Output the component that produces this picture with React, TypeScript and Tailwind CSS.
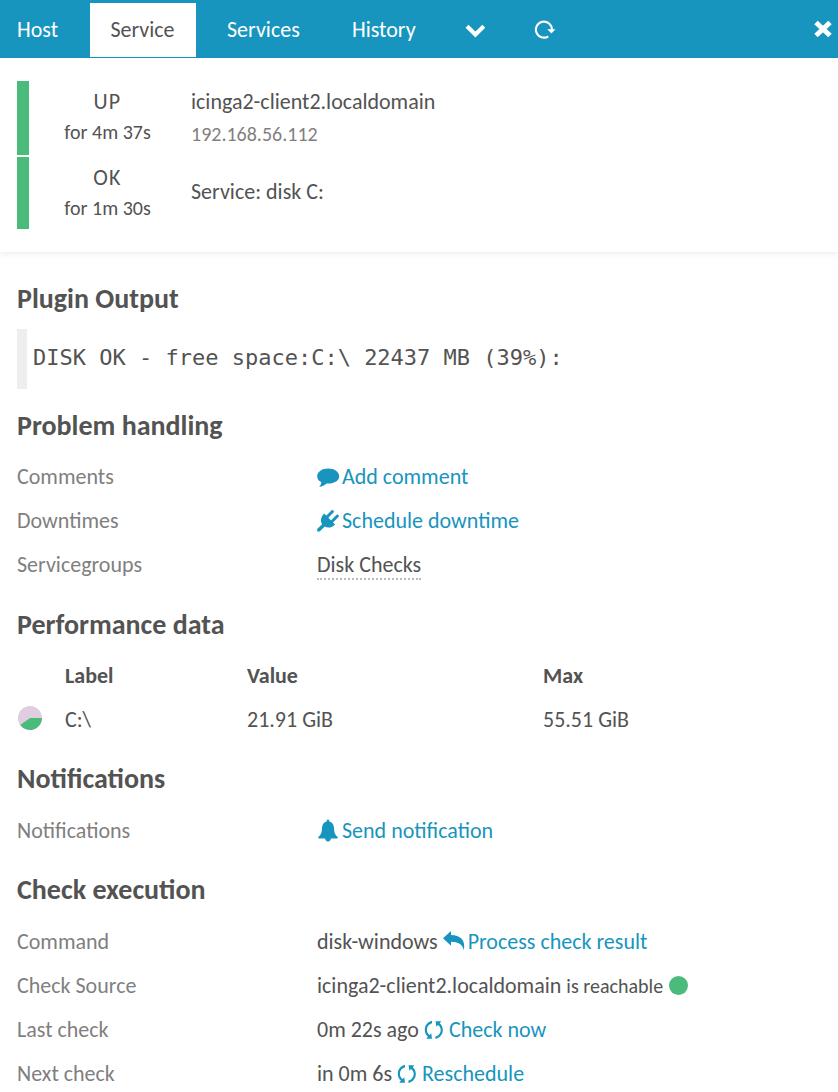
import { ReactNode } from 'react';

function Heading({ children }: { children: ReactNode }) {
  return <h2 className="h-[67px] pl-[17px] pt-[21px] text-[28px] font-bold leading-8">{children}</h2>;
}

function Row({ label, children }: { label: string; children: ReactNode }) {
  return (
    <div className="flex h-11 items-center pl-[17px]">
      <div className="w-[300px] shrink-0 text-[#7f7f7f]">{label}</div>
      <div className="flex items-center">{children}</div>
    </div>
  );
}

function Sync() {
  return (
    <svg className="mb-px mr-[5px] h-5 w-5 shrink-0" viewBox="0 0 20 20" fill="#1795be">
      <path d="M8 .8C3.8 1.8.8 5.3.8 9.8C.8 12.7 1.9 15 3.9 16.6L2.3 18.8H8L7.2 13.2L5.6 15C3.8 13.7 2.9 12 2.9 9.8C2.9 6.5 5 4 8 3.2Z" />
      <path d="M11.4 19C15.8 18 18.8 14.5 18.8 10C18.8 7.2 17.7 4.9 15.7 3.3L17.3 1.2H11.6L12.4 6.8L14 5C15.8 6.2 16.7 8 16.7 10C16.7 13.3 14.6 15.9 11.4 16.6Z" />
    </svg>
  );
}

export default function App() {
  return (
    <div className="h-[1092px] w-[838px] overflow-hidden bg-white font-['Carlito','Calibri','Lato',sans-serif] text-[22px] leading-7 text-[#535353]">
      <nav className="flex h-[58px] items-center bg-[#1795be] text-white">
        <div className="w-[90px] pl-[17px] pt-[2px]">Host</div>
        <div className="mt-[3px] flex h-[54px] w-[106px] items-center justify-center self-start bg-white pr-px text-[#535353]">Service</div>
        <div className="w-[156px] pl-[31px] pt-[2px]">Services</div>
        <div className="w-[113px] pt-[2px]">History</div>
        <svg className="mt-px h-5 w-5" viewBox="0 0 20 20" fill="none">
          <path d="M2 6.3L10.4 14.5L18.8 6.3" stroke="white" strokeWidth="4.2" />
        </svg>
        <svg className="ml-[49px] mt-px h-[22px] w-[22px]" viewBox="0 0 22 22" fill="none">
          <path d="M14.3 17.3A8 8 0 1 1 17.9 10.8" stroke="white" strokeWidth="2.1" />
          <path d="M13.3 10.2H21.5L17.4 14.6Z" fill="white" />
        </svg>
        <svg className="ml-auto mr-[6px] h-[18px] w-[18px]" viewBox="0 0 18 18">
          <path d="M2 2.5L16 15.5M16 2.5L2 15.5" stroke="white" strokeWidth="5" />
        </svg>
      </nav>
      <header className="h-[194px] pl-[17px] pt-[23px] shadow-[0_2px_6px_rgba(0,0,0,0.07)]">
        <div className="mb-[2px] flex h-[74px]">
          <div className="w-3 bg-[#4abb7b]" />
          <div className="w-[162px] pr-[5px] text-center">
            <div className="pt-[7px] tracking-[1.2px]">UP</div>
            <div className="pt-[2px] text-[20px]">for 4m 37s</div>
          </div>
          <div>
            <div className="pt-[7px]">icinga2-client2.localdomain</div>
            <div className="pt-1 text-[20px] text-[#7f7f7f]">192.168.56.112</div>
          </div>
        </div>
        <div className="flex h-[72px]">
          <div className="w-3 bg-[#4abb7b]" />
          <div className="w-[162px] pr-[5px] text-center">
            <div className="pt-[7px] tracking-[1.2px]">OK</div>
            <div className="pt-[2px] text-[20px]">for 1m 30s</div>
          </div>
          <div className="flex items-center pb-[2px]">Service: disk C:</div>
        </div>
      </header>
      <h2 className="h-[77px] pl-[17px] pt-[31px] text-[28px] font-bold leading-8">Plugin Output</h2>
      <pre className="ml-[17px] flex h-[60px] items-center border-l-[10px] border-[#eee] pb-[2px] pl-[6px] font-['DejaVu_Sans_Mono',monospace] text-[22px]">{'DISK OK - free space:C:\\ 22437 MB (39%):'}</pre>
      <div className="-mb-px"><Heading>Problem handling</Heading></div>
      <Row label="Comments">
        <svg className="mr-[2px] h-6 w-[23px]" viewBox="0 0 23 24" fill="#1795be">
          <path d="M11.2 3.5C17.5 3.5 22.2 7 22.2 11.2S17.5 18.5 11.3 18.5L9.7 18.4C7.5 20.4 5 21.5 2.3 21.8C3.7 20.3 4.2 19 4.2 17.1C1.5 15.8.2 13.7.2 11.2C.2 7 4.9 3.5 11.2 3.5Z" />
        </svg>
        <span className="text-[#1795be]">Add comment</span>
      </Row>
      <Row label="Downtimes">
        <svg className="mr-[2px] h-6 w-[23px]" viewBox="0 0 23 24" fill="#1795be">
          <path d="M7.2 4.6L18.1 15.5C15.2 18.5 11.3 19.6 7.7 17.6L2.7 22.5H.2V20L5.1 15.2C2.9 11.7 4.1 7.8 7.2 4.6Z" />
          <path d="M10 8L15.4 2.5M14.7 12.7L20.4 7" stroke="#1795be" strokeWidth="3" strokeLinecap="round" />
        </svg>
        <span className="text-[#1795be]">Schedule downtime</span>
      </Row>
      <Row label="Servicegroups"><span className="mt-[2px] border-b-2 border-dotted border-[#bbb] leading-[26px]">Disk Checks</span></Row>
      <div className="-mb-px pt-px"><Heading>Performance data</Heading></div>
      <div className="flex h-11 items-center pl-[65px] font-bold">
        <div className="w-[182px]">Label</div>
        <div className="w-[296px]">Value</div>
        <div>Max</div>
      </div>
      <div className="flex h-11 items-center pl-[17px]">
        <svg className="-mt-1 mr-[22px] h-[26px] w-[26px]" viewBox="0 0 26 26">
          <circle cx="13" cy="13" r="12" fill="#dfcde0" />
          <path d="M13 13H25A12 12 0 0 1 3.2 19.9Z" fill="#4abb7b" />
        </svg>
        <div className="w-[182px]">C:\</div>
        <div className="w-[296px]">21.91 GiB</div>
        <div>55.51 GiB</div>
      </div>
      <Heading>Notifications</Heading>
      <Row label="Notifications">
        <svg className="mr-[2px] h-6 w-[23px]" viewBox="0 0 23 24" fill="#1795be">
          <path d="M11 .4C12 .4 12.3 1.2 12.3 2.4C15.2 3 16.8 5.4 17 8.9C17.2 13.8 18.1 15.9 20.8 18C20.8 19 20.4 19.6 19.3 19.6H13.8A2.8 2.8 0 0 1 8.2 19.6H2.7C1.6 19.6 1.2 19 1.2 18C3.9 15.9 4.8 13.8 5 8.9C5.2 5.4 6.8 3 9.7 2.4C9.7 1.2 10 .4 11 .4Z" />
        </svg>
        <span className="text-[#1795be]">Send notification</span>
      </Row>
      <Heading>Check execution</Heading>
      <Row label="Command">
        <span>disk-windows</span>
        <svg className="ml-[5px] mr-[2px] h-6 w-[23px]" viewBox="0 0 23 24" fill="#1795be">
          <path d="M0 8.2L8 .9V5.1C17 5.2 23 10 20.8 20.5C19.8 14.5 15 11.8 8 11.8V15.8Z" />
        </svg>
        <span className="text-[#1795be]">Process check result</span>
      </Row>
      <Row label="Check Source">
        <span>icinga2-client2.localdomain</span>
        <span className="ml-[5px] text-[20px]">is reachable</span>
        <div className="mb-px ml-[6px] h-[19px] w-[19px] rounded-full bg-[#4abb7b]" />
      </Row>
      <Row label="Last check"><span className="mr-[5px]">0m 22s ago</span><Sync /><span className="text-[#1795be]">Check now</span></Row>
      <Row label="Next check"><span className="mr-[5px]">in 0m 6s</span><Sync /><span className="text-[#1795be]">Reschedule</span></Row>
    </div>
  );
}
